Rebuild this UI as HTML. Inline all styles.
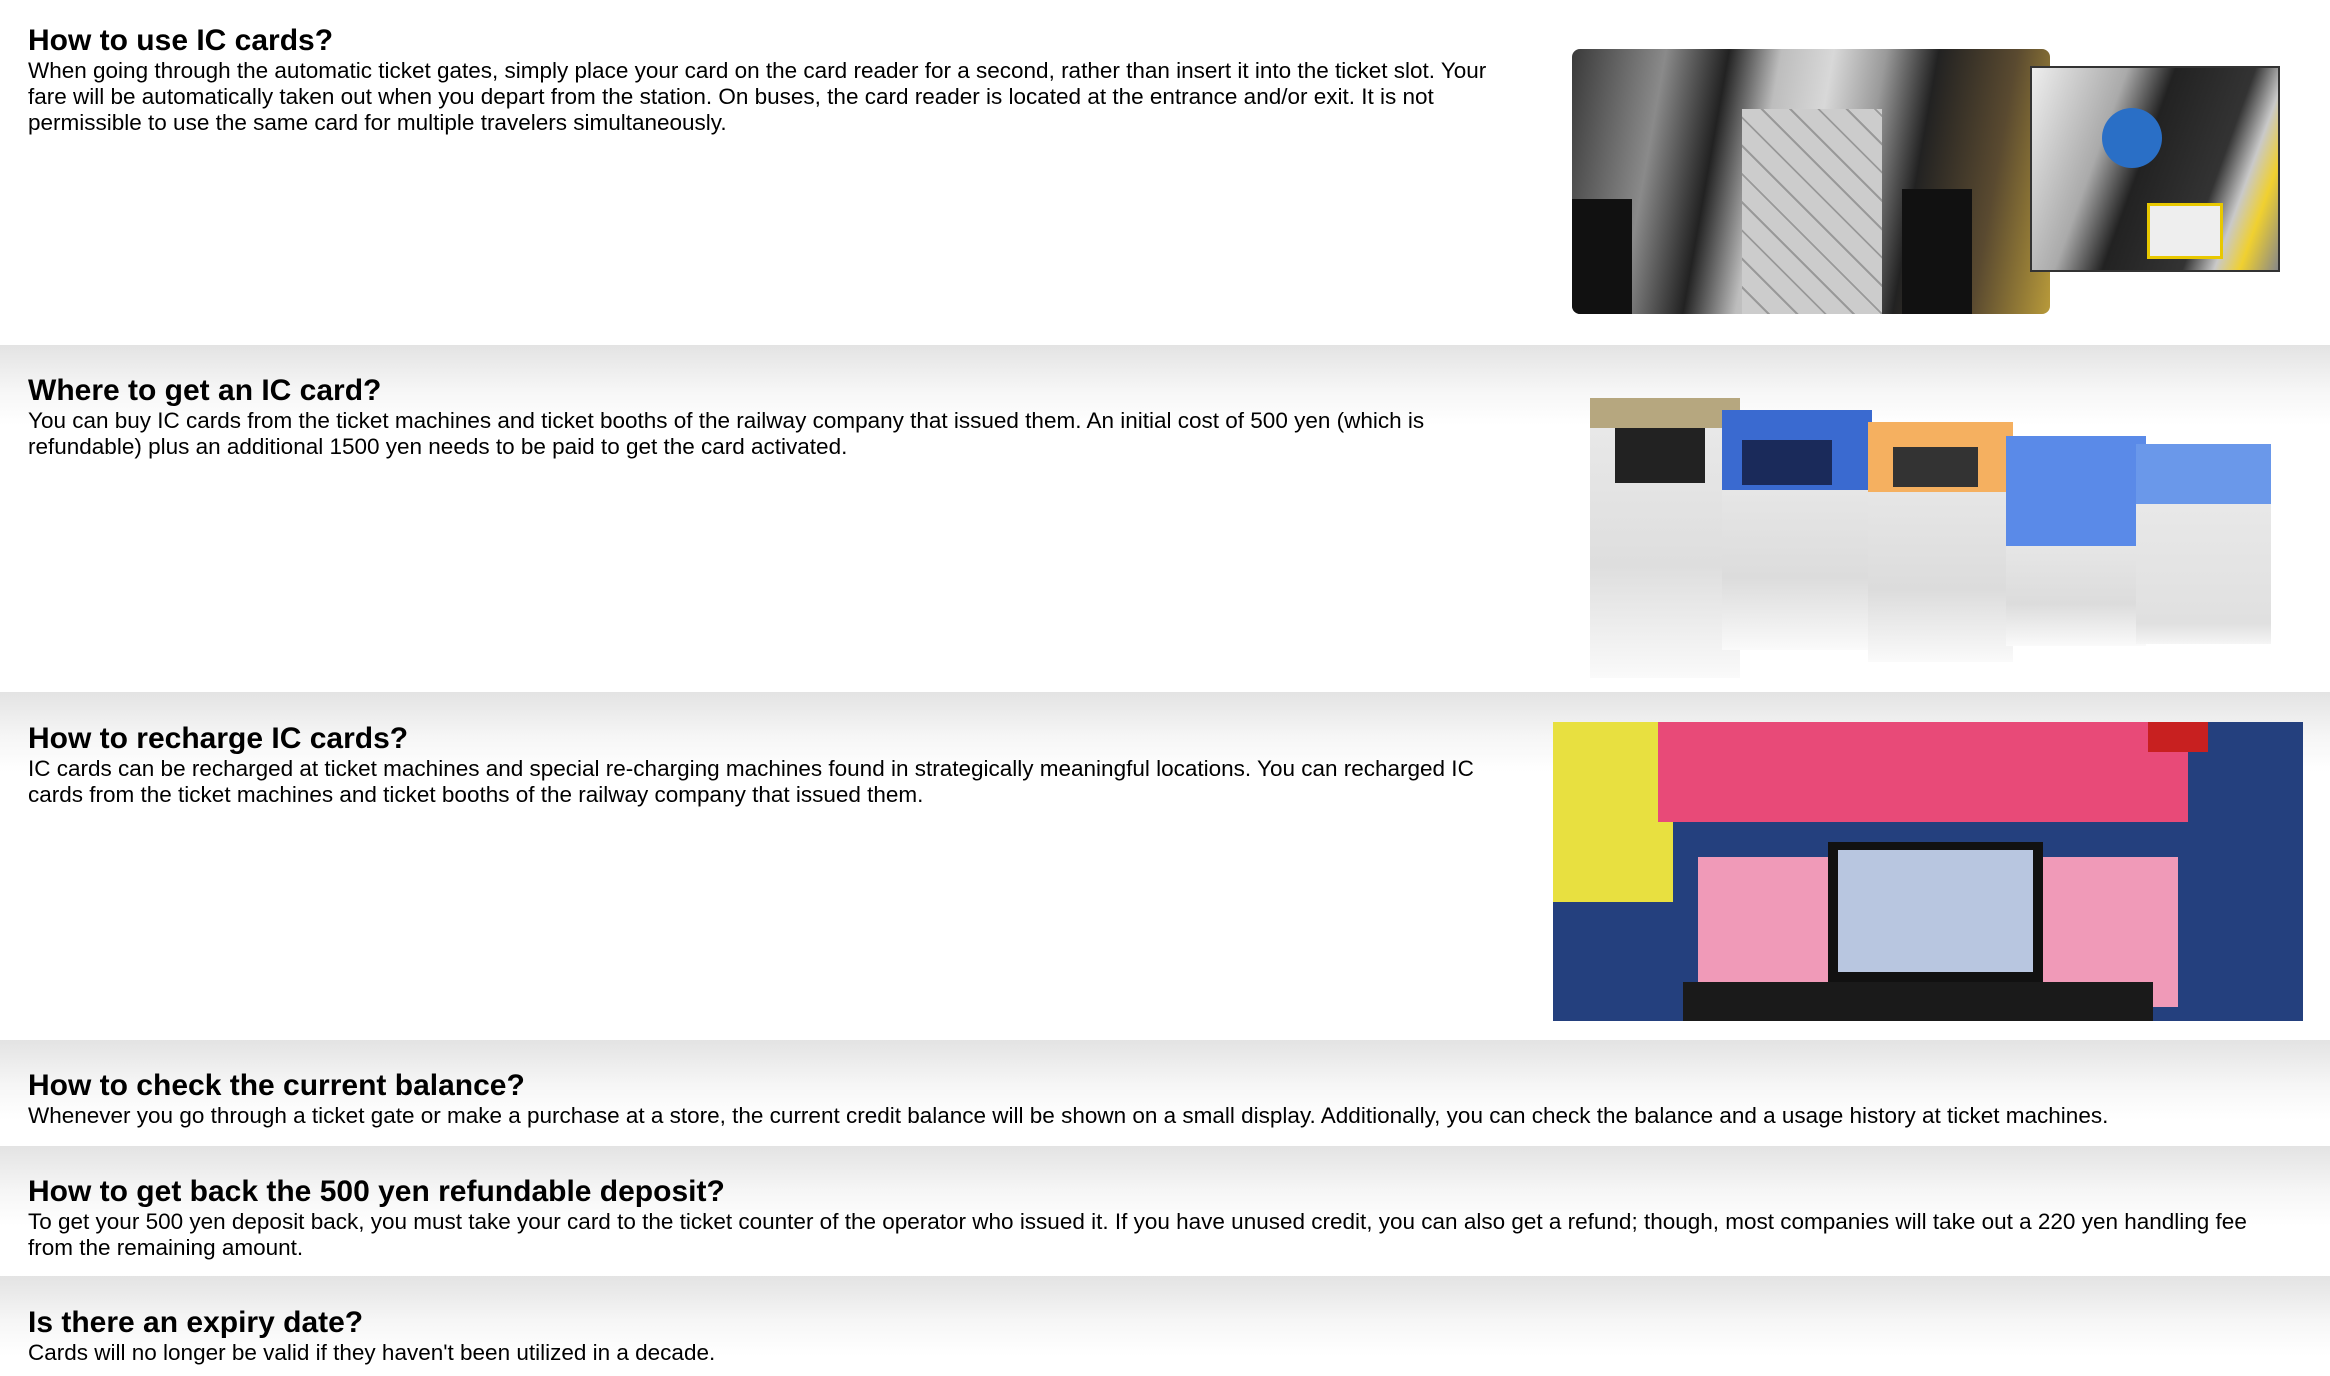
<!DOCTYPE html>
<html><head><meta charset="utf-8"><style>
html,body{margin:0;padding:0;width:2330px;height:1376px;overflow:hidden;background:#fff;font-family:"Liberation Sans",Arial,sans-serif;color:#000}
.sec{position:absolute;left:0;width:2330px;background:linear-gradient(#e3e3e3 0,#f6f6f6 45px,#fff 80px)}
.sec.first{background:#fff}
.h{position:absolute;left:28px;font-weight:bold;font-size:30px;line-height:38px;white-space:nowrap}
.p{position:absolute;left:28px;font-size:22.5px;line-height:26px}
.img{position:absolute;overflow:hidden}
</style></head><body>

<div class="sec first" style="top:0;height:342px"></div>
<div class="h" style="top:22px">How to use IC cards?</div>
<div class="p" style="top:58px;width:1480px">When going through the automatic ticket gates, simply place your card on the card reader for a second, rather than insert it into the ticket slot. Your fare will be automatically taken out when you depart from the station. On buses, the card reader is located at the entrance and/or exit. It is not permissible to use the same card for multiple travelers simultaneously.</div>
<div class="img" style="left:1572px;top:49px;width:478px;height:265px;border-radius:8px;background:linear-gradient(100deg,#3a3a3a 0,#8a8a8a 18%,#222 30%,#bdbdbd 40%,#d8d8d8 50%,#9a9a9a 60%,#222 70%,#5a4a30 85%,#b89a3a 100%)">
  <div style="position:absolute;left:170px;top:60px;width:140px;height:205px;background:repeating-linear-gradient(45deg,#ccc 0 18px,#999 18px 20px)"></div>
  <div style="position:absolute;left:0;top:150px;width:60px;height:115px;background:#111"></div>
  <div style="position:absolute;left:330px;top:140px;width:70px;height:125px;background:#111"></div>
</div>
<div class="img" style="left:2030px;top:66px;width:246px;height:202px;border:2px solid #333;background:linear-gradient(110deg,#eee 0,#aaa 30%,#222 45%,#333 70%,#c9c9c9 80%,#f0d030 88%,#888 100%)">
  <div style="position:absolute;left:70px;top:40px;width:60px;height:60px;border-radius:50%;background:#2a6fc6"></div>
  <div style="position:absolute;left:115px;top:135px;width:70px;height:50px;background:#eee;border:3px solid #e8c800"></div>
</div>

<div class="sec" style="top:345px;height:346px"></div>
<div class="h" style="top:372px">Where to get an IC card?</div>
<div class="p" style="top:408px;width:1480px">You can buy IC cards from the ticket machines and ticket booths of the railway company that issued them. An initial cost of 500 yen (which is refundable) plus an additional 1500 yen needs to be paid to get the card activated.</div>
<div class="img" style="left:1590px;top:398px;width:150px;height:280px;background:linear-gradient(#b6a77f 0,#b6a77f 30px,#e8e8e8 30px,#dedede 60%,#fafafa 100%)"><div style="position:absolute;left:25px;top:30px;width:90px;height:55px;background:#222"></div></div>
<div class="img" style="left:1722px;top:410px;width:150px;height:240px;background:linear-gradient(#3a6ad0 0,#3a6ad0 80px,#e6e6e6 80px,#dcdcdc 70%,#fafafa 100%)"><div style="position:absolute;left:20px;top:30px;width:90px;height:45px;background:#1a2a5a"></div></div>
<div class="img" style="left:1868px;top:422px;width:145px;height:240px;background:linear-gradient(#f5b060 0,#f5b060 70px,#e6e6e6 70px,#dcdcdc 70%,#fafafa 100%)"><div style="position:absolute;left:25px;top:25px;width:85px;height:40px;background:#333"></div></div>
<div class="img" style="left:2006px;top:436px;width:140px;height:210px;background:linear-gradient(#5a8ae8 0,#5a8ae8 110px,#e6e6e6 110px,#dcdcdc 80%,#fafafa 100%)"></div>
<div class="img" style="left:2136px;top:444px;width:135px;height:200px;background:linear-gradient(#6a98ea 0,#6a98ea 60px,#e8e8e8 60px,#e0e0e0 90%,#f5f5f5 100%)"></div>

<div class="sec" style="top:692px;height:347px"></div>
<div class="h" style="top:720px">How to recharge IC cards?</div>
<div class="p" style="top:756px;width:1480px">IC cards can be recharged at ticket machines and special re-charging machines found in strategically meaningful locations. You can recharged IC cards from the ticket machines and ticket booths of the railway company that issued them.</div>
<div class="img" style="left:1553px;top:722px;width:750px;height:299px;background:#24407e">
  <div style="position:absolute;left:0;top:0;width:120px;height:180px;background:#e8e040"></div>
  <div style="position:absolute;left:105px;top:0;width:530px;height:100px;background:#e84a78"></div>
  <div style="position:absolute;left:145px;top:135px;width:480px;height:150px;background:#f09ab8"></div>
  <div style="position:absolute;left:275px;top:120px;width:215px;height:140px;background:#111"></div>
  <div style="position:absolute;left:285px;top:128px;width:195px;height:122px;background:#b8c6e0"></div>
  <div style="position:absolute;left:130px;top:260px;width:470px;height:39px;background:#1a1a1a"></div>
  <div style="position:absolute;left:595px;top:0;width:60px;height:30px;background:#c82020"></div>
</div>

<div class="sec" style="top:1040px;height:104px"></div>
<div class="h" style="top:1067px">How to check the current balance?</div>
<div class="p" style="top:1103px;width:2260px">Whenever you go through a ticket gate or make a purchase at a store, the current credit balance will be shown on a small display. Additionally, you can check the balance and a usage history at ticket machines.</div>

<div class="sec" style="top:1146px;height:129px"></div>
<div class="h" style="top:1173px">How to get back the 500 yen refundable deposit?</div>
<div class="p" style="top:1209px;width:2260px">To get your 500 yen deposit back, you must take your card to the ticket counter of the operator who issued it. If you have unused credit, you can also get a refund; though, most companies will take out a 220 yen handling fee from the remaining amount.</div>

<div class="sec" style="top:1276px;height:100px"></div>
<div class="h" style="top:1304px">Is there an expiry date?</div>
<div class="p" style="top:1340px;width:2260px">Cards will no longer be valid if they haven't been utilized in a decade.</div>
</body></html>
